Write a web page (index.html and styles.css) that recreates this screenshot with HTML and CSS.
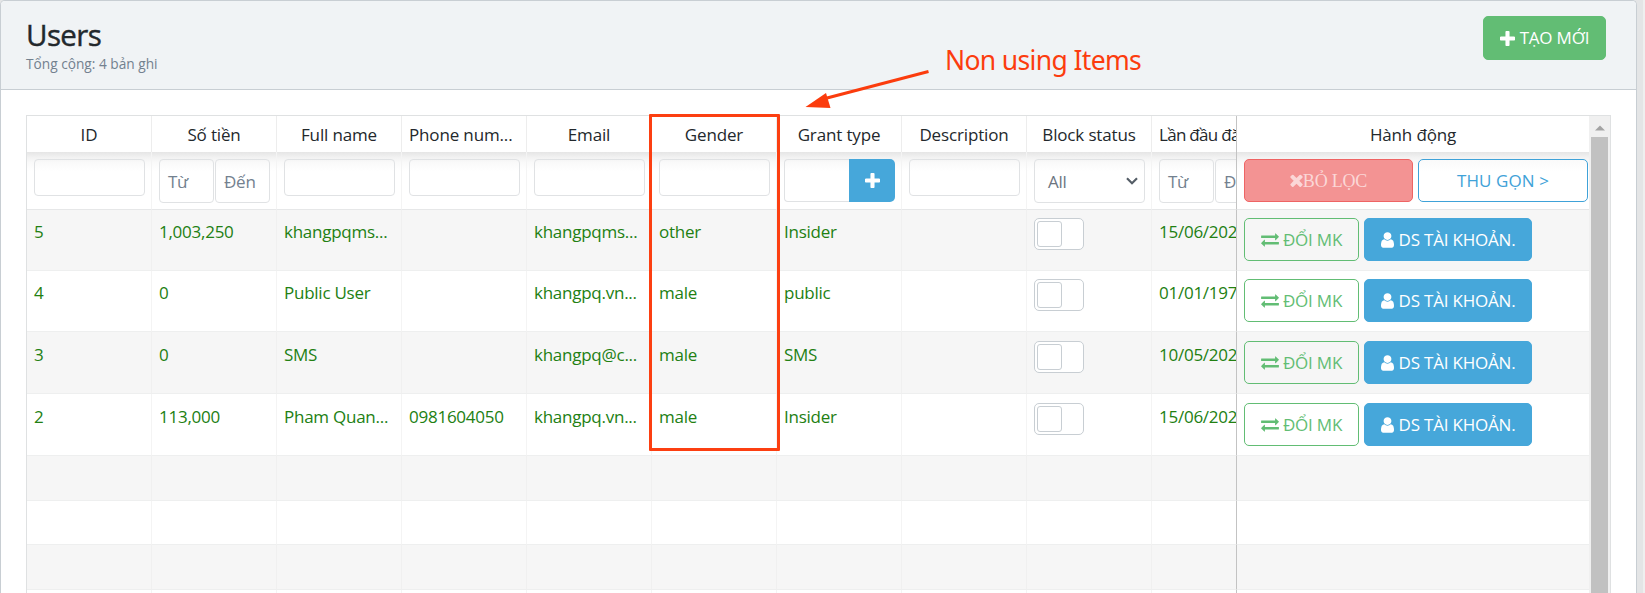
FILE: index.html
```html
<!DOCTYPE html>
<html lang="vi">
<head>
<meta charset="utf-8">
<title>Users</title>
<link rel="stylesheet" href="styles.css">
</head>
<body>
<svg class="defs" aria-hidden="true">
  <symbol id="plus" viewBox="192 128 1408 1408"><path d="M1600 736v192q0 40-28 68t-68 28h-416v416q0 40-28 68t-68 28h-192q-40 0-68-28t-28-68v-416h-416q-40 0-68-28t-28-68v-192q0-40 28-68t68-28h416v-416q0-40 28-68t68-28h192q40 0 68 28t28 68v416h416q40 0 68 28t28 68z"/></symbol>
  <symbol id="times" viewBox="302 302 1188 1252"><path d="M1490 1322q0 40-28 68l-136 136q-28 28-68 28t-68-28l-294-294-294 294q-28 28-68 28t-68-28l-136-136q-28-28-28-68t28-68l294-294-294-294q-28-28-28-68t28-68l136-136q28-28 68-28t68 28l294 294 294-294q28-28 68-28t68 28l136 136q28 28 28 68t-28 68l-294 294 294 294q28 28 28 68z"/></symbol>
  <symbol id="exchange" viewBox="0 256 1792 1408"><path d="M1792 1184v192q0 13-9.500 22.500t-22.500 9.500h-1376v192q0 13-9.500 22.500t-22.500 9.500q-12 0-24-10l-319-320q-9-9-9-22 0-14 9-23l320-320q9-9 23-9 13 0 22.500 9.500t9.500 22.500v192h1376q13 0 22.500 9.500t9.500 22.500zm0-544q0 14-9 23l-320 320q-9 9-23 9-13 0-22.500-9.500t-9.500-22.500v-192h-1376q-13 0-22.500-9.500t-9.500-22.500v-192q0-13 9.500-22.500t22.500-9.500h1376v-192q0-14 9-23t23-9q12 0 24 10l319 319q9 9 9 23z"/></symbol>
  <symbol id="user" viewBox="256 128 1280 1536"><path d="M1536 1399q0 109-62.500 187t-150.500 78h-854q-88 0-150.500-78t-62.500-187q0-85 8.500-160.500t31.500-152 58.500-131 94-89 134.500-34.500q131 128 313 128t313-128q76 0 134.500 34.500t94 89 58.500 131 31.500 152 8.500 160.500zm-256-887q0 159-112.500 271.500t-271.500 112.500-271.500-112.500-112.500-271.500 112.500-271.500 271.500-112.500 271.500 112.500 112.500 271.500z"/></symbol>
</svg>
<main class="card">
  <header class="card-header">
    <div>
      <h1 class="title">Users</h1>
      <p class="subtitle">Tổng cộng: 4 bản ghi</p>
    </div>
    <button class="btn btn-create"><svg class="i-plus"><use href="#plus"/></svg><span>TẠO MỚI</span></button>
  </header>
  <section class="table">
    <div class="rows">
      <div class="row head">
        <div class="cell">ID</div><div class="cell">Số tiền</div><div class="cell">Full name</div><div class="cell phone">Phone num...</div><div class="cell">Email</div><div class="cell">Gender</div><div class="cell">Grant type</div><div class="cell">Description</div><div class="cell">Block status</div><div class="cell last">Lần đầu đă</div><div class="cell actions">Hành động</div>
      </div>
      <div class="row filter">
        <div class="cell"><div class="input"></div></div>
        <div class="cell range"><div class="input tall">Từ</div><div class="input tall">Đến</div></div>
        <div class="cell"><div class="input"></div></div>
        <div class="cell"><div class="input"></div></div>
        <div class="cell"><div class="input"></div></div>
        <div class="cell"><div class="input"></div></div>
        <div class="cell"><div class="group"><div class="group-input"></div><div class="group-btn"><svg class="i-plus"><use href="#plus"/></svg></div></div></div>
        <div class="cell"><div class="input"></div></div>
        <div class="cell"><div class="input tall select"><span>All</span><svg class="chevron" viewBox="0 0 12 8"><path d="M1 1.200L6 6.200L11 1.200"/></svg></div></div>
        <div class="cell last range"><div class="input tall">Từ</div><div class="input tall">Đến</div></div>
        <div class="cell actions"><button class="btn btn-clear"><svg class="i-times"><use href="#times"/></svg><span>BỎ LỌC</span></button><button class="btn btn-collapse"><span>THU GỌN &gt;</span></button></div>
      </div>
      <div class="row data odd">
        <div class="cell">5</div><div class="cell">1,003,250</div><div class="cell">khangpqms...</div><div class="cell"></div><div class="cell">khangpqms...</div><div class="cell">other</div><div class="cell">Insider</div><div class="cell"></div><div class="cell"><div class="toggle"><i></i></div></div><div class="cell last">15/06/202</div>
        <div class="cell actions"><button class="btn btn-pass"><svg class="i-exchange"><use href="#exchange"/></svg><span>ĐỔI MK</span></button><button class="btn btn-accounts"><svg class="i-user"><use href="#user"/></svg><span>DS TÀI KHOẢN.</span></button></div>
      </div>
      <div class="row data">
        <div class="cell">4</div><div class="cell">0</div><div class="cell">Public User</div><div class="cell"></div><div class="cell">khangpq.vn...</div><div class="cell">male</div><div class="cell">public</div><div class="cell"></div><div class="cell"><div class="toggle"><i></i></div></div><div class="cell last">01/01/197</div>
        <div class="cell actions"><button class="btn btn-pass"><svg class="i-exchange"><use href="#exchange"/></svg><span>ĐỔI MK</span></button><button class="btn btn-accounts"><svg class="i-user"><use href="#user"/></svg><span>DS TÀI KHOẢN.</span></button></div>
      </div>
      <div class="row data odd roomy">
        <div class="cell">3</div><div class="cell">0</div><div class="cell">SMS</div><div class="cell"></div><div class="cell">khangpq@c...</div><div class="cell">male</div><div class="cell">SMS</div><div class="cell"></div><div class="cell"><div class="toggle"><i></i></div></div><div class="cell last">10/05/202</div>
        <div class="cell actions"><button class="btn btn-pass"><svg class="i-exchange"><use href="#exchange"/></svg><span>ĐỔI MK</span></button><button class="btn btn-accounts"><svg class="i-user"><use href="#user"/></svg><span>DS TÀI KHOẢN.</span></button></div>
      </div>
      <div class="row data roomy">
        <div class="cell">2</div><div class="cell">113,000</div><div class="cell">Pham Quan...</div><div class="cell">0981604050</div><div class="cell">khangpq.vn...</div><div class="cell">male</div><div class="cell">Insider</div><div class="cell"></div><div class="cell"><div class="toggle"><i></i></div></div><div class="cell last">15/06/202</div>
        <div class="cell actions"><button class="btn btn-pass"><svg class="i-exchange"><use href="#exchange"/></svg><span>ĐỔI MK</span></button><button class="btn btn-accounts"><svg class="i-user"><use href="#user"/></svg><span>DS TÀI KHOẢN.</span></button></div>
      </div>
      <div class="row empty odd"><div class="cell"></div><div class="cell"></div><div class="cell"></div><div class="cell"></div><div class="cell"></div><div class="cell"></div><div class="cell"></div><div class="cell"></div><div class="cell"></div><div class="cell last"></div><div class="cell actions"></div></div>
      <div class="row empty short"><div class="cell"></div><div class="cell"></div><div class="cell"></div><div class="cell"></div><div class="cell"></div><div class="cell"></div><div class="cell"></div><div class="cell"></div><div class="cell"></div><div class="cell last"></div><div class="cell actions"></div></div>
      <div class="row empty odd"><div class="cell"></div><div class="cell"></div><div class="cell"></div><div class="cell"></div><div class="cell"></div><div class="cell"></div><div class="cell"></div><div class="cell"></div><div class="cell"></div><div class="cell last"></div><div class="cell actions"></div></div>
      <div class="row tail"><div class="cell"></div><div class="cell"></div><div class="cell"></div><div class="cell"></div><div class="cell"></div><div class="cell"></div><div class="cell"></div><div class="cell"></div><div class="cell"></div><div class="cell last"></div><div class="cell actions"></div></div>
    </div>
    <div class="scrollbar"><svg class="up" viewBox="0 0 10 6"><path d="M0 5.500L5 0.500L10 5.500Z"/></svg><div class="thumb"></div></div>
  </section>
</main>
<div class="page-track"></div>
<div class="highlight"></div>
<svg class="arrow" viewBox="0 0 130 44"><path class="shaft" d="M127.500 3.500L26 30"/><path class="tip" d="M4.500 39L25 25L29.500 40Z"/></svg>
<div class="note">Non using Items</div>
</body>
</html>
```
FILE: styles.css
```css
* { box-sizing: border-box; }
body {
  margin: 0; width: 1645px; height: 593px; overflow: hidden; position: relative;
  display: flex; background: #e4e5e6; color: #23282c;
  font-family: "Open Sans", "Noto Sans", sans-serif; font-size: 17px; letter-spacing: -0.25px; line-height: 26px;
}
.defs { position: absolute; width: 0; height: 0; }
svg { display: block; flex: none; fill: currentColor; }
.card {
  width: 1637px; height: 593px; flex: none; display: flex; flex-direction: column; overflow: hidden;
  background: #fff; border: 1px solid #c8ced3; border-bottom: 0; border-radius: 5px 5px 0 0;
}
.card-header {
  height: 89px; flex: none; background: #f0f3f5; border-bottom: 1px solid #c8ced3;
  display: flex; justify-content: space-between; align-items: flex-start; padding: 15px 30px 0 25px;
}
.title { margin: 0; font-size: 29.5px; font-weight: 500; line-height: 38px; letter-spacing: -0.6px; -webkit-text-stroke: 0.4px; }
.subtitle { margin: 0; font-size: 13.700px; line-height: 20px; letter-spacing: 0; color: #73818f; }
.btn {
  height: 43px; padding: 0; border: 1px solid; border-radius: 5px; background: none;
  font: inherit; letter-spacing: -0.2px; display: flex; align-items: center; justify-content: center; white-space: nowrap;
}
.i-plus { width: 15px; height: 15px; }
.i-times { width: 13px; height: 13px; }
.i-exchange { width: 18px; height: 14px; }
.i-user { width: 13px; height: 16px; }
.btn-create { width: 123px; height: 44px; gap: 5px; background: #62bd74; border-color: #62bd74; color: #fff; }

.table { margin: 25px 25px 0 25px; display: flex; border: 1px solid #dfe1e2; border-bottom: 0; flex: 1; min-height: 0; }
.rows { width: 1562px; flex: none; }
.row { display: grid; grid-template-columns: repeat(9, 125px) 84px 353px; }
.cell { padding: 0 7px; border-right: 1px solid #f4f4f4; border-bottom: 1px solid #eeefef; white-space: nowrap; overflow: hidden; }
.cell.last { border-right: 0; padding-right: 0; }
.cell.actions { border-right: 0; border-left: 1px solid #c3c3c3; padding-right: 0; display: flex; gap: 5px; }
.odd { background: #f6f6f6; }
.odd .cell { border-right-color: #f0f0f0; }

.head { height: 36px; text-align: center; letter-spacing: -0.15px; }
.head .cell { padding-top: 6px; border-bottom: 0; border-right-color: #ededed; }
.head .cell.last { border-right: 0; letter-spacing: -0.7px; }
.head .phone, .head .last { text-align: left; }
.head .actions { justify-content: center; padding-left: 0; }
.filter { height: 58px; background: linear-gradient(#e5e5e5, #f1f1f1 5px, #fafafa 11px, #fff 20px); }
.filter .cell { padding-top: 7px; border-bottom-color: #e6e7e8; }
.input { width: 111px; height: 37px; border: 1px solid #e0e2e4; border-radius: 4px; color: #73818f; }
.tall { height: 44px; line-height: 43px; padding-left: 8px; }
.range { display: flex; gap: 1px; }
.range .input { width: 55px; flex: none; }
.select { padding: 0 6px 0 13px; display: flex; justify-content: space-between; align-items: center; color: #6c757f; }
.chevron { width: 12px; height: 8px; fill: none; stroke: #565f68; stroke-width: 2.200; }
.group { display: flex; width: 111px; height: 43px; }
.group-input { flex: 1; border: 1px solid #e0e2e4; border-right: 0; border-radius: 4px 0 0 4px; }
.group-btn { width: 46px; background: #46a7da; color: #fff; border-radius: 0 5px 5px 0; display: flex; align-items: center; justify-content: center; }
.btn-clear { width: 169px; background: #f39393; border-color: #ee6464; color: #fbd7d7; font-family: "Liberation Serif", serif; font-size: 18px; }
.btn-collapse { width: 170px; border-color: #3fa2d8; color: #3fa2d8; letter-spacing: 0.1px; background: linear-gradient(#fafafa, #fff 12px); }

.data { height: 61px; color: #228012; }
.roomy { height: 62px; }
.data .cell { padding-top: 8px; line-height: 27px; }
.roomy .cell { padding-top: 9px; }
.btn-pass { width: 115px; gap: 4px; border-color: #62bd74; color: #62bd74; }
.btn-accounts { width: 168px; gap: 5px; border-color: #46a7da; background: #46a7da; color: #fff; }
.toggle { width: 50px; height: 32px; border: 1px solid #c8ced3; border-radius: 5px; background: #fff; padding: 2px; }
.toggle i { display: block; width: 25px; height: 26px; border: 1px solid #c8ced3; border-radius: 3px; }
.empty { height: 45px; }
.short { height: 44px; }
.tail { height: 3px; }
.tail .cell { border-bottom: 0; }

.scrollbar { width: 21px; padding: 9px 2px 0; background: #f0f0f0; display: flex; flex-direction: column; align-items: center; gap: 6px; }
.up { width: 10px; height: 6px; fill: #a3a3a3; }
.thumb { width: 17px; flex: 1; background: #c1c1c1; }
.page-track { width: 2px; margin-left: 6px; background: #efefef; }

.highlight { position: absolute; left: 649px; top: 114px; width: 131px; height: 337px; border: 3px solid #fc3f11; border-radius: 1px; }
.arrow { position: absolute; left: 801px; top: 68px; width: 130px; height: 44px; fill: #fb3c0d; }
.shaft { stroke: #fb3c0d; stroke-width: 3; }
.note { position: absolute; left: 945px; top: 42px; font-family: "Noto Sans", sans-serif; font-size: 26.500px; letter-spacing: -0.65px; line-height: 36px; color: #fc3c0e; white-space: nowrap; }
```
